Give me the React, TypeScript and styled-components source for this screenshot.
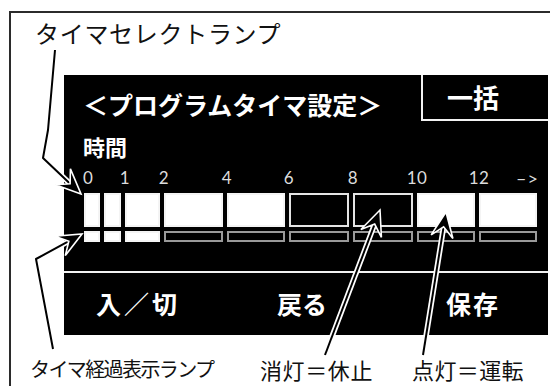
import React from 'react';
import styled, { createGlobalStyle } from 'styled-components';

type Pt = [number, number];

interface Lamp {
  w: number;
  on: boolean;
  elapsed: boolean;
  label?: string;
  start?: boolean;
  tail?: string;
}

const LAMPS: Lamp[] = [
  { w: 16, on: true, elapsed: true, label: '0', start: true },
  { w: 17, on: true, elapsed: true },
  { w: 35, on: true, elapsed: true, label: '1' },
  { w: 59, on: true, elapsed: false, label: '2' },
  { w: 58, on: true, elapsed: false, label: '4' },
  { w: 60, on: false, elapsed: false, label: '6' },
  { w: 60, on: false, elapsed: false, label: '8' },
  { w: 58, on: true, elapsed: false, label: '10' },
  { w: 58, on: true, elapsed: false, label: '12', tail: '–>' },
];

// callout arrows, page coordinates, last point is the tip
const ARROWS: Pt[][] = [
  [[55, 50], [48, 130], [43, 158], [81, 194]],
  [[53, 349], [36, 259], [82, 234]],
  [[325, 355], [380, 210]],
  [[423, 355], [446, 212]],
];

const GlobalStyle = createGlobalStyle`
  html, body {
    margin: 0;
    padding: 0;
    background: #fff;
    overflow: hidden;
  }
  body {
    font-family: "Noto Sans CJK JP", "Noto Sans", sans-serif;
  }
`;

const Page = styled.div`
  position: relative;
  width: 550px;
  height: 386px;
  overflow: hidden;
  padding: 11px 0 0 9px;
  box-sizing: border-box;
`;

const Frame = styled.div`
  width: 620px;
  height: 420px;
  border: 2px solid #2b2b2b;
  box-sizing: border-box;
  display: flex;
  flex-direction: column;
  padding-top: 6px;
`;

const TopLabel = styled.div`
  margin-left: 24px;
  font-size: 24px;
  line-height: 28px;
  letter-spacing: 0.7px;
  color: #111;
`;

const Screen = styled.div`
  margin: 28px 0 0 53px;
  width: 484px;
  height: 260px;
  background: #000;
  color: #fff;
  display: flex;
  flex-direction: column;
`;

const Header = styled.div`
  display: flex;
  height: 46px;
`;

const Title = styled.div`
  flex: 1;
  padding: 17px 0 0 19px;
  font-size: 25px;
  line-height: 25px;
  font-weight: 700;
  white-space: nowrap;
`;

const BulkButton = styled.div`
  width: 127px;
  box-sizing: border-box;
  border-left: 2px solid #f2f2f2;
  border-bottom: 2px solid #f2f2f2;
  display: flex;
  align-items: center;
  padding: 0 0 2px 24px;
  font-size: 26px;
  font-weight: 700;
`;

const Body = styled.div`
  padding-left: 20px;
  display: flex;
  flex-direction: column;
`;

const SectionLabel = styled.div`
  margin: 12px 0 0 -1px;
  font-size: 22px;
  line-height: 26px;
  font-weight: 700;
`;

const LampRow = styled.div<{ $h: number; $top: number }>`
  display: flex;
  gap: 4px;
  height: ${p => p.$h}px;
  margin-top: ${p => p.$top}px;
`;

const Tick = styled.div<{ $w: number }>`
  width: ${p => p.$w}px;
  display: flex;
  justify-content: space-between;
  font-family: Lato, "Liberation Sans", sans-serif;
  font-size: 17px;
  line-height: 18px;
  color: #dcdcdc;
`;

const TickText = styled.span<{ $start?: boolean }>`
  display: inline-block;
  transform: translateX(${p => (p.$start ? '-1px' : '-50%')});
  letter-spacing: ${p => (p.$start ? 0 : 0.5)}px;
`;

const TailText = styled.span`
  font-size: 18px;
  letter-spacing: 1px;
  margin-right: -2px;
`;

const SelectLamp = styled.div<{ $w: number; $on: boolean }>`
  width: ${p => p.$w}px;
  box-sizing: border-box;
  background: ${p => (p.$on ? '#fff' : '#000')};
  border: 2px solid ${p => (p.$on ? '#f4f4f4' : '#e4e4e4')};
`;

const ElapsedLamp = styled.div<{ $w: number; $on: boolean }>`
  width: ${p => p.$w}px;
  box-sizing: border-box;
  background: ${p => (p.$on ? '#fff' : '#000')};
  border: 2px solid ${p => (p.$on ? '#f4f4f4' : '#9a9a9a')};
`;

const CommandBar = styled.div`
  margin-top: 29px;
  border-top: 2px solid #f2f2f2;
  flex: 1;
  display: grid;
  grid-template-columns: 181px 169px auto;
  align-items: center;
  padding: 0 0 2px 32px;
  font-size: 25px;
  font-weight: 700;
`;

const Command = styled.div<{ $spacing?: number }>`
  letter-spacing: ${p => p.$spacing ?? 0}px;
`;

const Notes = styled.div`
  display: grid;
  grid-template-columns: 230px 152px auto;
  align-items: end;
  margin-top: 21px;
  padding-left: 19px;
  color: #111;
`;

const Note = styled.div<{ $size: number; $spacing?: number }>`
  font-size: ${p => p.$size}px;
  line-height: 26px;
  letter-spacing: ${p => p.$spacing ?? 0}px;
  white-space: nowrap;
`;

const Overlay = styled.svg`
  position: absolute;
  left: 0;
  top: 0;
  pointer-events: none;
`;

function headPoints(tip: Pt, from: Pt) {
  const dx = tip[0] - from[0];
  const dy = tip[1] - from[1];
  const len = Math.hypot(dx, dy);
  const d: Pt = [dx / len, dy / len];
  const n: Pt = [-d[1], d[0]];
  const L = 25;
  const W = 11;
  const notch: Pt = [tip[0] - d[0] * L * 0.6, tip[1] - d[1] * L * 0.6];
  const b1: Pt = [tip[0] - d[0] * L + n[0] * W, tip[1] - d[1] * L + n[1] * W];
  const b2: Pt = [tip[0] - d[0] * L - n[0] * W, tip[1] - d[1] * L - n[1] * W];
  return { notch, poly: [tip, b1, notch, b2] };
}

const Callouts: React.FC = () => (
  <Overlay width={550} height={386} viewBox="0 0 550 386">
    {ARROWS.map((path, i) => {
      const tip = path[path.length - 1];
      const { notch, poly } = headPoints(tip, path[path.length - 2]);
      const shaft = [...path.slice(0, -1), notch].map(p => p.join(',')).join(' ');
      return (
        <g key={i}>
          <polyline points={shaft} fill="none" stroke="#fff" strokeWidth={5.5} strokeLinejoin="round" />
          <polyline points={shaft} fill="none" stroke="#000" strokeWidth={2} strokeLinejoin="round" />
          <polygon
            points={poly.map(p => p.join(',')).join(' ')}
            fill="#000"
            stroke="#fff"
            strokeWidth={1.6}
            strokeLinejoin="miter"
          />
        </g>
      );
    })}
  </Overlay>
);

export default function App() {
  return (
    <Page>
      <GlobalStyle />
      <Frame>
        <TopLabel>タイマセレクトランプ</TopLabel>
        <Screen>
          <Header>
            <Title>＜プログラムタイマ設定＞</Title>
            <BulkButton>一括</BulkButton>
          </Header>
          <Body>
            <SectionLabel>時間</SectionLabel>
            <LampRow $h={18} $top={10}>
              {LAMPS.map((l, i) => (
                <Tick key={i} $w={l.w}>
                  {l.label && <TickText $start={l.start}>{l.label}</TickText>}
                  {l.tail && <TailText>{l.tail}</TailText>}
                </Tick>
              ))}
            </LampRow>
            <LampRow $h={34} $top={6}>
              {LAMPS.map((l, i) => (
                <SelectLamp key={i} $w={l.w} $on={l.on} />
              ))}
            </LampRow>
            <LampRow $h={11} $top={4}>
              {LAMPS.map((l, i) => (
                <ElapsedLamp key={i} $w={l.w} $on={l.elapsed} />
              ))}
            </LampRow>
          </Body>
          <CommandBar>
            <Command $spacing={3}>入／切</Command>
            <Command>戻る</Command>
            <Command $spacing={2}>保存</Command>
          </CommandBar>
        </Screen>
        <Notes>
          <Note $size={20} $spacing={-1.6}>タイマ経過表示ランプ</Note>
          <Note $size={22} $spacing={0.6}>消灯＝休止</Note>
          <Note $size={22} $spacing={0.4}>点灯＝運転</Note>
        </Notes>
      </Frame>
      <Callouts />
    </Page>
  );
}
